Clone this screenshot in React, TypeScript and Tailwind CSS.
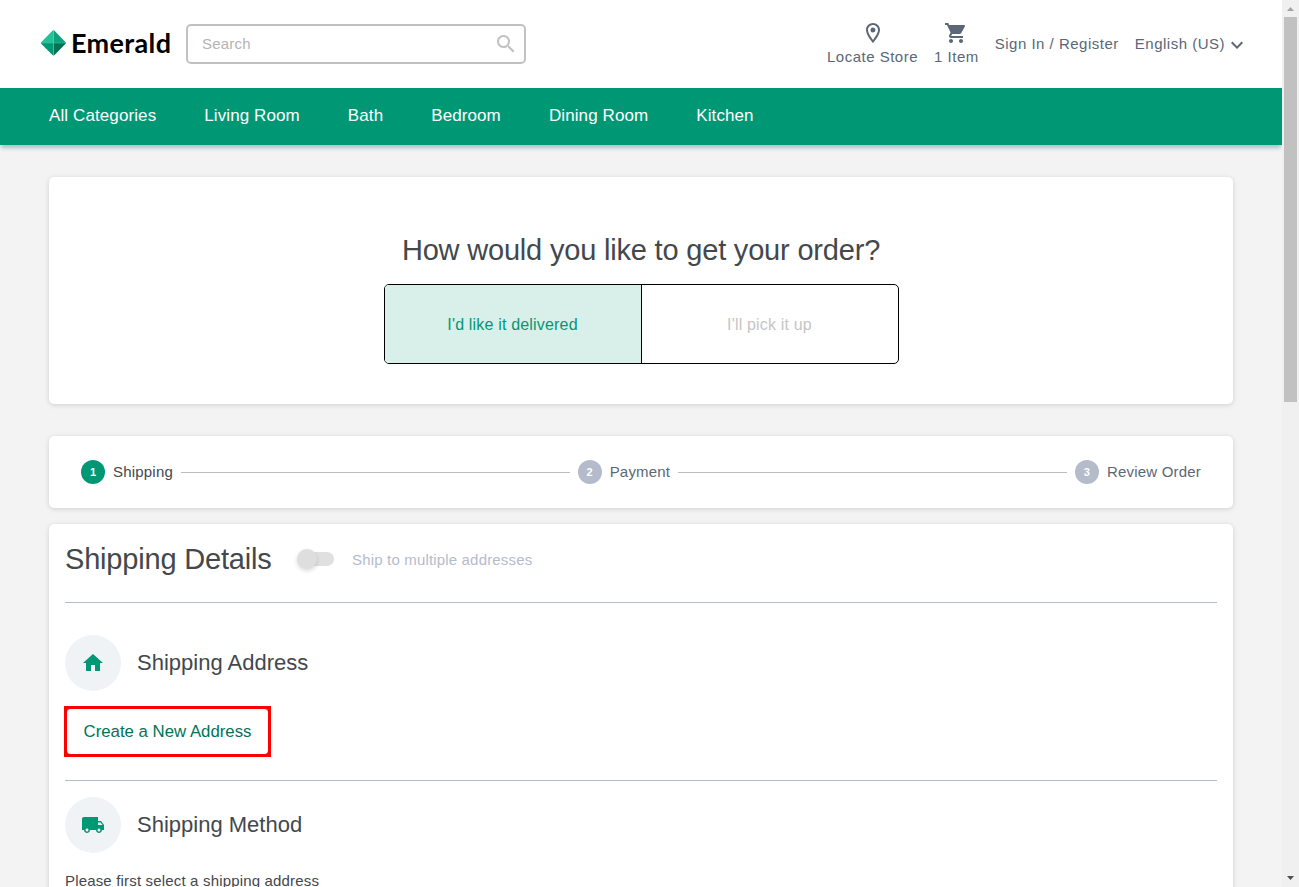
import React from "react";

const PATHS = {
  search:
    "M15.5 14h-.79l-.28-.27C15.41 12.59 16 11.11 16 9.5 16 5.91 13.09 3 9.5 3S3 5.91 3 9.5 5.91 16 9.5 16c1.61 0 3.09-.59 4.23-1.57l.27.28v.79l5 4.99L20.49 19l-4.99-5zm-6 0C7.01 14 5 11.99 5 9.5S7.01 5 9.5 5 14 7.01 14 9.5 11.99 14 9.5 14z",
  pin: "M12 2C8.13 2 5 5.13 5 9c0 5.25 7 13 7 13s7-7.75 7-13c0-3.87-3.13-7-7-7zM7 9c0-2.76 2.24-5 5-5s5 2.24 5 5c0 2.88-2.88 7.19-5 9.88C9.92 16.21 7 11.85 7 9zM12 6.5a2.5 2.5 0 1 0 0 5 2.5 2.5 0 0 0 0-5z",
  cart: "M7 18c-1.1 0-1.99.9-1.99 2S5.9 22 7 22s2-.9 2-2-.9-2-2-2zM1 2v2h2l3.6 7.59-1.35 2.45c-.16.28-.25.61-.25.96 0 1.1.9 2 2 2h12v-2H7.42c-.14 0-.25-.11-.25-.25l.03-.12.9-1.63h7.45c.75 0 1.41-.41 1.75-1.03l3.58-6.49c.08-.14.12-.31.12-.48 0-.55-.45-1-1-1H5.21l-.94-2H1zm16 16c-1.1 0-1.99.9-1.99 2s.89 2 1.99 2 2-.9 2-2-.9-2-2-2z",
  chevron: "M16.59 8.59L12 13.17 7.41 8.59 6 10l6 6 6-6z",
  home: "M10 20v-6h4v6h5v-8h3L12 3 2 12h3v8z",
  truck:
    "M20 8h-3V4H3c-1.1 0-2 .9-2 2v11h2c0 1.66 1.34 3 3 3s3-1.34 3-3h6c0 1.66 1.34 3 3 3s3-1.34 3-3h2v-5l-3-4zM6 18.5c-.83 0-1.5-.67-1.5-1.5s.67-1.5 1.5-1.5 1.5.67 1.5 1.5-.67 1.5-1.5 1.5zm13.5-9l1.96 2.5H17V9.5h2.5zm-1.5 9c-.83 0-1.5-.67-1.5-1.5s.67-1.5 1.5-1.5 1.5.67 1.5 1.5-.67 1.5-1.5 1.5z",
};

function Icon({ name, className = "" }: { name: keyof typeof PATHS; className?: string }) {
  return (
    <svg viewBox="0 0 24 24" className={`size-6 shrink-0 fill-current ${className}`}>
      <path d={PATHS[name]} />
    </svg>
  );
}

function Logo() {
  return (
    <div className="flex items-center pb-[2px]">
      <svg viewBox="0 0 26 26" className="size-[26px] shrink-0">
        <path d="M13.5.3Q12.9.3 12.2 1L1.4 12Q.8 12.5.8 13H13.5z" fill="#22c197" />
        <path d="M13.5.3Q14.1.3 14.8 1L25.3 12Q25.9 12.5 25.9 13H13.5z" fill="#0da27b" />
        <path d="M13.5 25.5Q12.9 25.5 12.2 24.8L1.4 14Q.8 13.5.8 13H13.5z" fill="#019875" />
        <path d="M13.5 25.5Q14.1 25.5 14.8 24.8L25.3 14Q25.9 13.5 25.9 13H13.5z" fill="#017357" />
        <path d="M13.5 1v24M1 13h25" stroke="#4fcfae" strokeWidth=".5" />
      </svg>
      <span className="ml-[5px] w-[100px] whitespace-nowrap font-['Lato',sans-serif] text-[27px] font-bold leading-8 tracking-[0.35px] text-black">
        Emerald
      </span>
    </div>
  );
}

function Header() {
  return (
    <header className="flex h-[88px] shrink-0 items-center justify-between bg-white pl-10 pr-[33px] text-[15px] leading-6 tracking-[0.5px] text-[#5b6776]">
      <div className="flex items-center gap-[15px]">
        <Logo />
        <div className="flex h-10 w-[340px] items-center justify-between rounded-[5px] border-2 border-[#c1c1c1] pl-[14px] pr-[6px] text-[#b4b4b4]">
          <span className="tracking-[0.2px]">Search</span>
          <Icon name="search" className="text-[#c1c1c1]" />
        </div>
      </div>
      <div className="flex items-center gap-4 whitespace-nowrap">
        <div className="flex flex-col items-center pt-[2px]">
          <Icon name="pin" />
          <span>Locate Store</span>
        </div>
        <div className="flex flex-col items-center pt-[2px]">
          <Icon name="cart" />
          <span>1 Item</span>
        </div>
        <span>Sign In / Register</span>
        <div className="flex items-center">
          <span>English (US)</span>
          <Icon name="chevron" className="mt-[2px]" />
        </div>
      </div>
    </header>
  );
}

const CATEGORIES = ["All Categories", "Living Room", "Bath", "Bedroom", "Dining Room", "Kitchen"];

function Nav() {
  return (
    <nav className="z-10 flex h-[57px] shrink-0 gap-12 bg-[#009874] pl-[49px] pt-4 text-[17px] leading-6 tracking-[0.1px] text-white shadow-[0_4px_4px_-1px_#b4bbc9]">
      {CATEGORIES.map((c) => (
        <span key={c}>{c}</span>
      ))}
    </nav>
  );
}

function Card({ className = "", children }: { className?: string; children: React.ReactNode }) {
  return (
    <section className={`rounded-[5px] bg-white shadow-[0_1px_5px_rgba(0,0,0,0.15)] ${className}`}>{children}</section>
  );
}

function Step({ n, label, active }: { n: number; label: string; active?: boolean }) {
  return (
    <div className={`flex items-center gap-2 ${active ? "text-[#43484d]" : "text-[#5b6776]"}`}>
      <span
        className={`flex size-6 items-center justify-center rounded-full text-[11px] font-bold tracking-normal text-white ${
          active ? "bg-[#009874]" : "bg-[#b4bccb]"
        }`}
      >
        {n}
      </span>
      <span>{label}</span>
    </div>
  );
}

function SectionTitle({ icon, children }: { icon: "home" | "truck"; children: React.ReactNode }) {
  return (
    <div className="flex items-center gap-4">
      <span className="flex size-14 items-center justify-center rounded-full bg-[#eff3f6] text-[#009874]">
        <Icon name={icon} />
      </span>
      <h3 className="text-[22px] leading-8">{children}</h3>
    </div>
  );
}

function Scrollbar() {
  return (
    <div className="flex w-[17px] shrink-0 flex-col bg-[#f0f0f0]">
      <svg viewBox="0 0 17 17" className="size-[17px] shrink-0">
        <path d="M5 11h7L8.5 7z" fill="#a3a3a3" />
      </svg>
      <div className="mx-[2px] h-[385px] bg-[#c1c1c1]" />
      <svg viewBox="0 0 17 17" className="mt-auto size-[17px] shrink-0">
        <path d="M5 6h7l-3.5 4z" fill="#505050" />
      </svg>
    </div>
  );
}

export default function App() {
  return (
    <div className="flex h-[887px] w-[1299px] overflow-hidden font-['Liberation_Sans',Arial,sans-serif] text-[#43484d]">
      <div className="flex min-w-0 flex-1 flex-col overflow-hidden bg-[#f3f3f3]">
        <Header />
        <Nav />
        <main className="flex shrink-0 flex-col pl-[49px] pr-[49px] pt-8">
          <Card className="flex h-[227px] flex-col items-center pt-[53px]">
            <h1 className="text-[29px] leading-10 tracking-[-0.19px]">How would you like to get your order?</h1>
            <div className="mt-[14px] flex h-20 w-[515px] overflow-hidden rounded-[5px] border border-black text-[16px] tracking-[0.18px]">
              <button className="w-[257px] border-r border-black bg-[#d9efe9] pt-[2px] text-[#009874]">
                I'd like it delivered
              </button>
              <button className="flex-1 pt-[2px] text-[#c5c5c5]">I'll pick it up</button>
            </div>
          </Card>

          <Card className="mt-8 flex h-[72px] items-center gap-2 px-8 text-[15px] tracking-[0.2px]">
            <Step n={1} label="Shipping" active />
            <div className="h-px flex-1 bg-[#bdbdbd]" />
            <Step n={2} label="Payment" />
            <div className="h-px flex-1 bg-[#bdbdbd]" />
            <Step n={3} label="Review Order" />
          </Card>

          <Card className="mt-4 h-[400px] px-4">
            <div className="flex h-[78px] items-center border-b border-transparent pb-[7px]">
              <h2 className="w-[232px] text-[29px] leading-10 tracking-[-0.19px]">Shipping Details</h2>
              <div className="flex h-5 w-[37px] items-center">
                <span className="z-10 size-5 shrink-0 rounded-full bg-[#dedede] shadow-[0_2px_4px_rgba(0,0,0,0.15)]" />
                <span className="-ml-[15px] h-[14px] w-8 shrink-0 rounded-full bg-[#e0e0e0]" />
              </div>
              <span className="ml-[18px] pt-[2px] text-[15px] tracking-[0.17px] text-[#b4bccb]">
                Ship to multiple addresses
              </span>
            </div>
            <div className="h-px bg-[#b4bccb]" />
            <div className="mt-8">
              <SectionTitle icon="home">Shipping Address</SectionTitle>
              <div className="-ml-px mt-[15px] h-[51px] w-[207px] border-[3px] border-[#ff0000] bg-[#009874]">
                <button className="size-full rounded-[4px] bg-white text-[16.8px] tracking-normal text-[#017357]">
                  Create a New Address
                </button>
              </div>
            </div>
            <div className="mt-[23px] h-px bg-[#b4bccb]" />
            <div className="mt-4">
              <SectionTitle icon="truck">Shipping Method</SectionTitle>
              <p className="mt-4 text-[15px] leading-6 tracking-[0.17px]">Please first select a shipping address</p>
            </div>
          </Card>
        </main>
      </div>
      <Scrollbar />
    </div>
  );
}
